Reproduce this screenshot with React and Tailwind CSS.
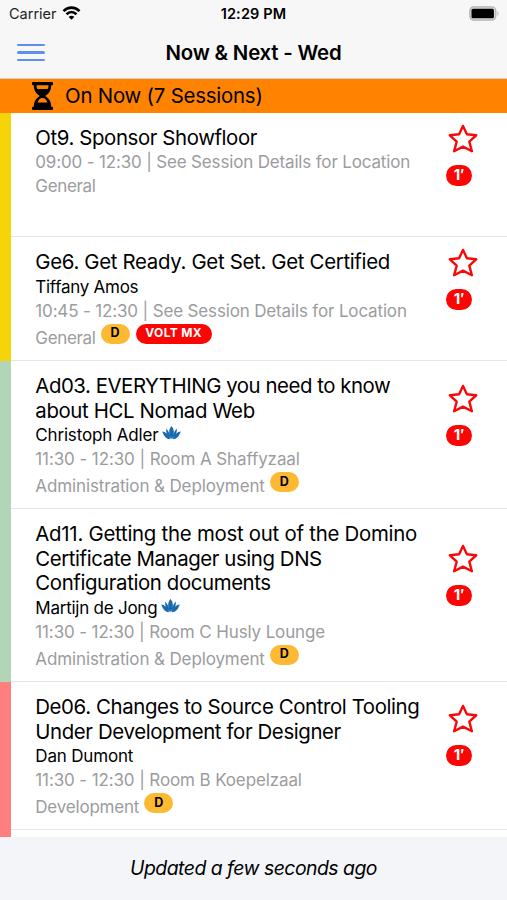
import React from "react";

const sessions = [
  {
    bar: "bg-[#f5d508]", height: "h-[124px]", actions: "pt-[11px]",
    title: [["Ot9. Sponsor Showfloor", "tracking-[-0.4px]"]],
    time: ["09:00 - 12:30 | See Session Details for Location", "tracking-[-0.165px]"],
    track: ["General", "tracking-[-0.33px]"], tags: [],
  },
  {
    bar: "bg-[#f5d508]", height: "h-[124px]", actions: "pt-[11px]",
    title: [["Ge6. Get Ready. Get Set. Get Certified", "tracking-[-0.32px]"]],
    speaker: ["Tiffany Amos", "tracking-[-0.27px]"],
    time: ["10:45 - 12:30 | See Session Details for Location", "tracking-[-0.155px]"],
    track: ["General", "tracking-[-0.33px]"], tags: ["D", "VOLT MX"],
  },
  {
    bar: "bg-[#b0d6b7]", height: "h-[148px]", actions: "pt-[23px]",
    title: [["Ad03. EVERYTHING you need to know", "tracking-[-0.46px]"], ["about HCL Nomad Web", "tracking-[-0.37px]"]],
    speaker: ["Christoph Adler", "tracking-[-0.17px]"], lotus: true,
    time: ["11:30 - 12:30 | Room A Shaffyzaal", "tracking-[-0.1px]"],
    track: ["Administration & Deployment", "tracking-[-0.12px]"], tags: ["D"],
  },
  {
    bar: "bg-[#b0d6b7]", height: "h-[173px]", actions: "pt-[35px]",
    title: [["Ad11. Getting the most out of the Domino", "tracking-[-0.26px]"], ["Certificate Manager using DNS", "tracking-[-0.42px]"], ["Configuration documents", "tracking-[-0.39px]"]],
    speaker: ["Martijn de Jong", "tracking-[-0.24px]"], lotus: true,
    time: ["11:30 - 12:30 | Room C Husly Lounge", "tracking-[-0.13px]"],
    track: ["Administration & Deployment", "tracking-[-0.12px]"], tags: ["D"],
  },
  {
    bar: "bg-[#ff7f7f]", height: "h-[148px]", actions: "pt-[22px]",
    title: [["De06. Changes to Source Control Tooling", "tracking-[-0.39px]"], ["Under Development for Designer", "tracking-[-0.38px]"]],
    speaker: ["Dan Dumont", "tracking-[-0.18px]"],
    time: ["11:30 - 12:30 | Room B Koepelzaal", "tracking-[-0.12px]"],
    track: ["Development", "tracking-[-0.2px]"], tags: ["D"],
  },
];

function Star() {
  return (
    <svg className="ml-[2px] block h-[30px] w-[30px]" viewBox="0 0 30 30" fill="none" stroke="#f80808" strokeWidth="2.4" strokeLinejoin="round">
      <path d="M15 1.9 L18.9 10.3 L28.2 11.3 L21.3 17.6 L23.9 27.2 L15 22.6 L6.1 27.2 L8.7 17.6 L1.8 11.3 L11.1 10.3 Z" />
    </svg>
  );
}

function Lotus() {
  return (
    <svg className="ml-[4px] block h-[14px] w-[19px] -translate-y-[2px]" viewBox="0 0 19 14" fill="#1769b0">
      <path d="M9.5 0 C12.8 4 12.4 8.5 9.5 13 C6.6 8.5 6.2 4 9.5 0Z" />
      <path d="M4.2 2.6 C6.4 5 8.4 8.5 9 13 C5.4 10.8 3.8 7.4 4.2 2.6Z" />
      <path d="M14.8 2.6 C12.6 5 10.6 8.5 10 13 C13.6 10.8 15.2 7.4 14.8 2.6Z" />
      <path d="M.2 5.6 C3.4 5.6 6.2 8.4 8.3 13.2 C4 13.2 2.4 10.8 .2 5.6Z" />
      <path d="M18.8 5.6 C15.6 5.6 12.8 8.4 10.7 13.2 C15 13.2 16.6 10.8 18.8 5.6Z" />
    </svg>
  );
}

function Tag({ label }) {
  return label === "D" ? (
    <span className="ml-[5px] flex h-[20px] w-[29px] items-center justify-center rounded-full bg-[#fdb931] pb-[1px] text-[12.5px] font-bold text-black">D</span>
  ) : (
    <span className="ml-[6px] flex h-[20px] w-[76px] items-center justify-center rounded-full bg-[#fb0505] pb-[1px] text-[12px] font-bold tracking-[0.35px] text-white">{label}</span>
  );
}

function Session({ s }) {
  return (
    <div className={`flex shrink-0 ${s.height}`}>
      <div className={`w-[11px] shrink-0 ${s.bar}`} />
      <div className="flex flex-1 border-b border-[#e6e6e6] pl-[24.3px]">
        <div className="w-[410.7px] whitespace-nowrap pt-[13px]">
          {s.title.map(([text, tracking]) => (
            <div key={text} className="h-[24.5px] text-[20.4px] leading-[24.5px] text-black"><span className={tracking}>{text}</span></div>
          ))}
          {s.speaker && (
            <div className="flex h-[24px] items-center text-[17px] leading-[24px] text-black">
              <span className={s.speaker[1]}>{s.speaker[0]}</span>
              {s.lotus && <Lotus />}
            </div>
          )}
          <div className={`text-[17px] text-[#9b9ca0] ${s.speaker ? "h-[25px] leading-[25px]" : "h-[23px] leading-[22px]"}`}><span className={s.time[1]}>{s.time[0]}</span></div>
          <div className={`flex text-[17px] text-[#9b9ca0] ${s.speaker ? "h-[28px] leading-[28px]" : "h-[24px] leading-[24px]"}`}>
            <span className={s.track[1]}>{s.track[0]}</span>
            {s.tags.map((t) => <Tag key={t} label={t} />)}
          </div>
        </div>
        <div className={`flex flex-col items-start ${s.actions}`}>
          <Star />
          <span className="mt-[11px] flex h-[21px] w-[26px] items-center justify-center rounded-full bg-[#fb0505] text-[15px] font-bold text-white">1′</span>
        </div>
      </div>
    </div>
  );
}

export default function App() {
  return (
    <div className="flex h-[900px] w-[507px] flex-col overflow-hidden bg-white font-['Inter','Liberation_Sans',sans-serif]">
      <header className="flex h-[79px] shrink-0 flex-col border-b border-[#d5cfca] bg-[#f7f7f8]">
        <div className="grid h-[27px] grid-cols-3 items-center px-[9px] text-black">
          <div className="flex items-center">
            <span className="text-[14.5px] text-[#222]">Carrier</span>
            <svg className="ml-[5px] h-[14px] w-[19px] -translate-y-[1px]" viewBox="0 0 18 14" fill="none" stroke="#000" strokeWidth="2.6">
              <path d="M1 5.2 C5.5 .4 12.5 .4 17 5.2" />
              <path d="M4 8.3 C7 5.4 11 5.4 14 8.3" />
              <path d="M9 13.7 L6.2 10.9 C7.8 9.5 10.2 9.5 11.8 10.9Z" fill="#000" stroke="none" />
            </svg>
          </div>
          <div className="text-center text-[14.5px] font-semibold"><span className="tracking-[0.15px]">12:29 PM</span></div>
          <svg className="h-[15px] w-[31px] translate-x-[2px] justify-self-end" viewBox="0 0 31 15">
            <rect x=".8" y=".8" width="26" height="13.4" rx="4" fill="#d9d9d9" stroke="#b3b3b3" strokeWidth="1.2" />
            <rect x="2.5" y="2.7" width="22.4" height="9.6" rx="1.5" fill="#000" />
            <path d="M28.5 5 Q30.5 7.5 28.5 10Z" fill="#aaa" />
          </svg>
        </div>
        <div className="grid h-[51px] grid-cols-3 items-center px-[17px]">
          <div className="flex w-[28px] flex-col gap-[5px]">
            <i className="h-[2.3px] rounded bg-[#5b8ff0]" /><i className="h-[2.3px] rounded bg-[#5b8ff0]" /><i className="h-[2.3px] rounded bg-[#5b8ff0]" />
          </div>
          <h1 className="flex justify-center whitespace-nowrap pt-[1px] text-[20.4px] font-semibold"><span className="tracking-[-0.2px]">Now &amp; Next - Wed</span></h1>
        </div>
      </header>
      <div className="flex h-[34px] shrink-0 items-center bg-[#ff8200] pl-[32px] text-black">
        <svg className="h-[28px] w-[21px]" viewBox="0 0 21 28">
          <path fillRule="evenodd" d="M1 0H20Q21 0 21 1V2.3Q21 3.3 20 3.3H19.2C19.2 8.5 17 11.6 13.2 14C17 16.4 19.2 19.5 19.2 24.7H20Q21 24.7 21 25.7V27Q21 28 20 28H1Q0 28 0 27V25.7Q0 24.7 1 24.7H1.8C1.8 19.5 4 16.4 7.8 14C4 11.6 1.8 8.5 1.8 3.3H1Q0 3.3 0 2.3V1Q0 0 1 0ZM4.4 3.3Q4.5 5.4 5.2 7H15.8Q16.5 5.4 16.6 3.3ZM5.6 20.4H15.4Q13.8 16 10.5 16T5.6 20.4Z" />
        </svg>
        <span className="ml-[12px] pt-[1px] text-[20.4px]"><span className="tracking-[-0.21px]">On Now (7 Sessions)</span></span>
      </div>
      <main className="flex h-[724px] shrink-0 flex-col overflow-hidden">
        {sessions.map((s) => <Session key={s.title[0][0]} s={s} />)}
        <div className="flex flex-1"><div className="w-[11px] bg-[#ff7f7f]" /></div>
      </main>
      <footer className="flex flex-1 items-center justify-center bg-[#f3f5f9] text-[19.4px] italic text-black"><span className="tracking-[-0.5px]">Updated a few seconds ago</span></footer>
    </div>
  );
}
